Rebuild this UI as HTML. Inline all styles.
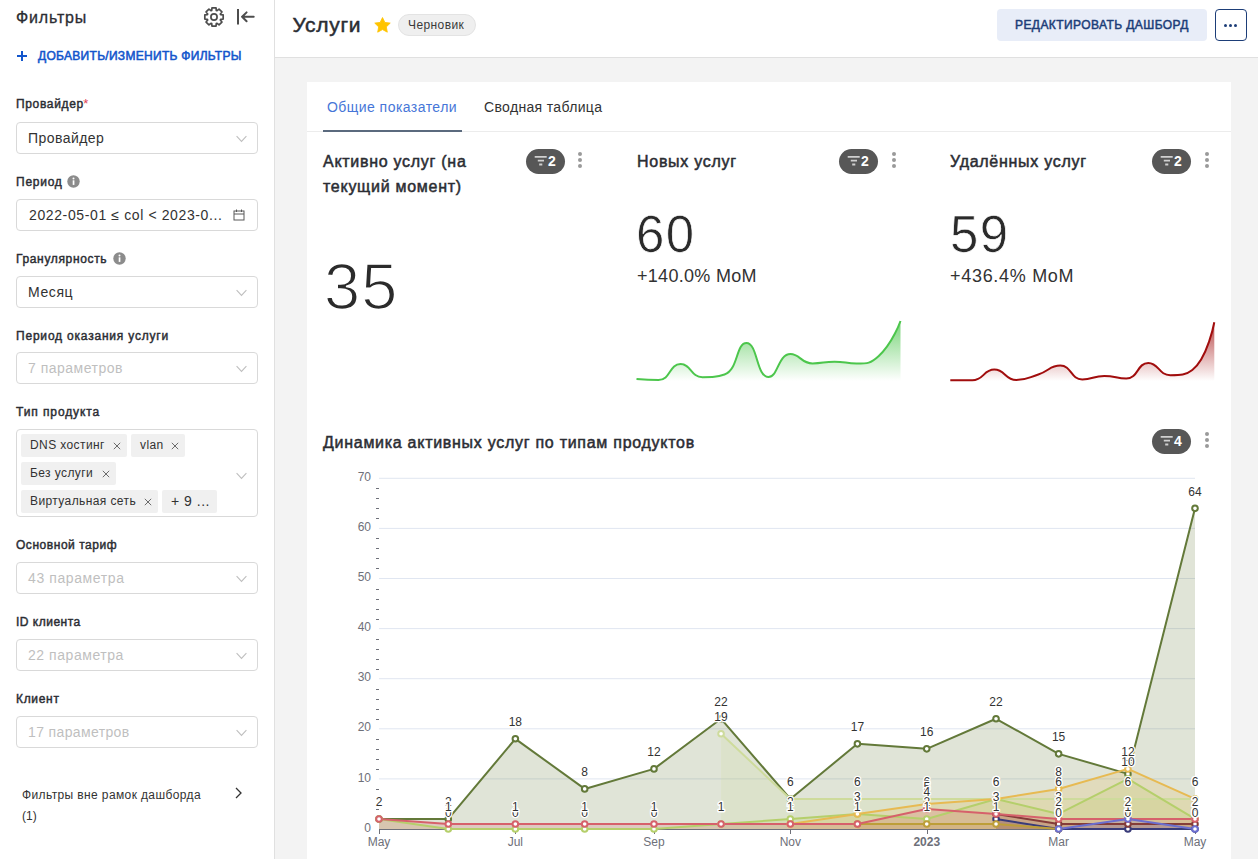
<!DOCTYPE html>
<html><head><meta charset="utf-8">
<style>
*{box-sizing:border-box;margin:0;padding:0}
html,body{width:1258px;height:859px;overflow:hidden;background:#f3f3f3;font-family:"Liberation Sans",sans-serif;color:#323232}
.abs{position:absolute}
#side{position:absolute;left:0;top:0;width:275px;height:859px;background:#fff;border-right:1px solid #e0e0e0}
#hdr{position:absolute;left:275px;top:0;width:983px;height:58px;background:#fff;border-bottom:1px solid #e0e0e0}
.t{position:absolute;white-space:nowrap;line-height:1}
.lbl{font-size:12px;font-weight:normal;-webkit-text-stroke:0.45px #2b2d33;color:#2b2d33;letter-spacing:0.65px}
.sel{position:absolute;left:16px;width:242px;height:32px;border:1px solid #d9d9d9;border-radius:4px;background:#fff}
.sel .v{position:absolute;left:11px;top:8px;font-size:14px;line-height:1;white-space:nowrap;color:#323232;letter-spacing:0.45px}
.sel .ph{color:#bfbfbf}
.chev{position:absolute;left:219px;top:12px;width:11px;height:8px}
.tag{position:absolute;height:23px;background:#f0f0f0;border-radius:2px;font-size:12px;line-height:23px;padding-left:9px;color:#323232;white-space:nowrap;letter-spacing:0.4px}
.tag svg{position:absolute;top:8px}
#card{position:absolute;left:307px;top:82px;width:924px;height:800px;background:#fff}
.ct{font-size:16px;font-weight:normal;-webkit-text-stroke:0.5px #2b2d33;color:#2b2d33;line-height:25px;letter-spacing:0.72px !important}
.badge{position:absolute;width:39px;height:25px;border-radius:12.5px;background:#575757;color:#fff;font-size:14px;font-weight:bold}
.badge svg{position:absolute;left:8px;top:6px}
.badge b{position:absolute;left:22px;top:5px;line-height:1;font-size:14px}
.sb{font-weight:normal;-webkit-text-stroke:0.5px #2b2d33;color:#2b2d33}
.kebab{position:absolute;width:4px}
.kebab i{display:block;width:4px;height:4px;border-radius:2px;background:#9a9a9a;margin-bottom:2.1px}
svg text.ax{font-family:"Liberation Sans",sans-serif;font-size:12px;fill:#6E7079}
svg text.axb{font-weight:bold}
svg text.lb{font-family:"Liberation Sans",sans-serif;font-size:12px;fill:#333;text-anchor:middle;stroke:#fff;stroke-width:2.5px;paint-order:stroke;stroke-linejoin:round}
</style></head><body>
<div id="side">
  <div class="t sb" style="left:16px;top:10px;font-size:16px;letter-spacing:0.84px;-webkit-text-stroke-width:0.3px">Фильтры</div>
  <svg class="abs" style="left:202px;top:5px" width="24" height="24" viewBox="0 0 24 24"><path fill="none" stroke="#4d4d4d" stroke-width="1.7" stroke-linejoin="round" d="M18.62,9.72 L21.18,9.97 L21.18,14.03 L18.62,14.28 L18.29,15.07 L19.93,17.05 L17.05,19.93 L15.07,18.29 L14.28,18.62 L14.03,21.18 L9.97,21.18 L9.72,18.62 L8.93,18.29 L6.95,19.93 L4.07,17.05 L5.71,15.07 L5.38,14.28 L2.82,14.03 L2.82,9.97 L5.38,9.72 L5.71,8.93 L4.07,6.95 L6.95,4.07 L8.93,5.71 L9.72,5.38 L9.97,2.82 L14.03,2.82 L14.28,5.38 L15.07,5.71 L17.05,4.07 L19.93,6.95 L18.29,8.93Z"/><circle cx="12" cy="12" r="3.1" fill="none" stroke="#4d4d4d" stroke-width="1.7"/></svg>
  <svg class="abs" style="left:236px;top:8px" width="20" height="18" viewBox="0 0 20 18"><path d="M2 1v15.6" stroke="#4d4d4d" stroke-width="2" fill="none"/><path d="M17.7 8.75H6M10.6 4.4L6.1 8.75l4.5 4.5" stroke="#4d4d4d" stroke-width="2" fill="none" stroke-linecap="round" stroke-linejoin="round"/></svg>
  <svg class="abs" style="left:16px;top:50px" width="12" height="12" viewBox="0 0 12 12"><path d="M6 1v10M1 6h10" stroke="#1356cc" stroke-width="2"/></svg>
  <div class="t sb" style="left:38px;top:50px;font-size:12px;color:#1356cc;-webkit-text-stroke:0.55px #1356cc;letter-spacing:0.3px">ДОБАВИТЬ/ИЗМЕНИТЬ ФИЛЬТРЫ</div>

  <div class="t lbl" style="left:16px;top:97.2px;letter-spacing:0.65px">Провайдер<span style="color:#e04355;-webkit-text-stroke:0;font-size:13px;position:relative;top:0px;margin-left:-0.5px">*</span></div>
  <div class="sel" style="top:122px"><div class="v" style="left:11px">Провайдер</div><svg class="chev" viewBox="0 0 11 8"><path d="M0.6 1.2l4.9 5.2 4.9-5.2" fill="none" stroke="#bfbfbf" stroke-width="1.1"/></svg></div>

  <div class="t lbl" style="left:16px;top:175.7px;letter-spacing:0.75px">Период</div>
  <svg class="abs" style="left:66.5px;top:175.4px" width="13" height="13" viewBox="0 0 13 13"><circle cx="6.5" cy="6.5" r="6.2" fill="#8c8c8c"/><rect x="5.7" y="5.3" width="1.7" height="4.6" fill="#fff"/><circle cx="6.5" cy="3.6" r="1" fill="#fff"/></svg>
  <div class="sel" style="top:199px"><div class="v" style="left:12px;top:8px;letter-spacing:0.62px">2022-05-01 ≤ col &lt; 2023-0...</div><svg class="abs" style="left:216px;top:9px" width="12" height="12" viewBox="0 0 12 12"><rect x="1" y="2" width="10" height="9" fill="none" stroke="#595959" stroke-width="1"/><path d="M1 5h10M3.5 0.5v2.5M8.5 0.5v2.5" stroke="#595959" stroke-width="1"/></svg></div>

  <div class="t lbl" style="left:16px;top:252.7px;letter-spacing:0.65px">Гранулярность</div>
  <svg class="abs" style="left:112.5px;top:252.4px" width="13" height="13" viewBox="0 0 13 13"><circle cx="6.5" cy="6.5" r="6.2" fill="#8c8c8c"/><rect x="5.7" y="5.3" width="1.7" height="4.6" fill="#fff"/><circle cx="6.5" cy="3.6" r="1" fill="#fff"/></svg>
  <div class="sel" style="top:276px"><div class="v" style="letter-spacing:0.6px">Месяц</div><svg class="chev" viewBox="0 0 11 8"><path d="M0.6 1.2l4.9 5.2 4.9-5.2" fill="none" stroke="#bfbfbf" stroke-width="1.1"/></svg></div>

  <div class="t lbl" style="left:16px;top:330px;letter-spacing:0.8px">Период оказания услуги</div>
  <div class="sel" style="top:352px"><div class="v ph" style="letter-spacing:0.5px">7 параметров</div><svg class="chev" viewBox="0 0 11 8"><path d="M0.6 1.2l4.9 5.2 4.9-5.2" fill="none" stroke="#bfbfbf" stroke-width="1.1"/></svg></div>

  <div class="t lbl" style="left:16px;top:406px;letter-spacing:0.9px">Тип продукта</div>
  <div class="sel" style="top:429px;height:88px">
    <div class="tag" style="left:4px;top:3.5px;width:106px">DNS хостинг<svg style="left:92px" width="8" height="8" viewBox="0 0 8 8"><path d="M0.8 0.8l6.4 6.4M7.2 0.8L0.8 7.2" stroke="#6b6b6b" stroke-width="1"/></svg></div>
    <div class="tag" style="left:114px;top:3.5px;width:54px">vlan<svg style="left:40px" width="8" height="8" viewBox="0 0 8 8"><path d="M0.8 0.8l6.4 6.4M7.2 0.8L0.8 7.2" stroke="#6b6b6b" stroke-width="1"/></svg></div>
    <div class="tag" style="left:4px;top:31.5px;width:95px">Без услуги<svg style="left:81px" width="8" height="8" viewBox="0 0 8 8"><path d="M0.8 0.8l6.4 6.4M7.2 0.8L0.8 7.2" stroke="#6b6b6b" stroke-width="1"/></svg></div>
    <div class="tag" style="left:4px;top:59.5px;width:137px">Виртуальная сеть<svg style="left:123px" width="8" height="8" viewBox="0 0 8 8"><path d="M0.8 0.8l6.4 6.4M7.2 0.8L0.8 7.2" stroke="#6b6b6b" stroke-width="1"/></svg></div>
    <div class="tag" style="left:145px;top:59.5px;width:55px;font-size:14px;letter-spacing:0.5px">+ 9 ...</div>
    <svg class="chev" style="top:42px" viewBox="0 0 11 8"><path d="M0.6 1.2l4.9 5.2 4.9-5.2" fill="none" stroke="#bfbfbf" stroke-width="1.1"/></svg>
  </div>

  <div class="t lbl" style="left:16px;top:539px;letter-spacing:0.54px">Основной тариф</div>
  <div class="sel" style="top:562px"><div class="v ph" style="top:8px;letter-spacing:0.6px">43 параметра</div><svg class="chev" viewBox="0 0 11 8"><path d="M0.6 1.2l4.9 5.2 4.9-5.2" fill="none" stroke="#bfbfbf" stroke-width="1.1"/></svg></div>

  <div class="t lbl" style="left:16px;top:615.5px;letter-spacing:0.5px">ID клиента</div>
  <div class="sel" style="top:639px"><div class="v ph" style="letter-spacing:0.55px">22 параметра</div><svg class="chev" viewBox="0 0 11 8"><path d="M0.6 1.2l4.9 5.2 4.9-5.2" fill="none" stroke="#bfbfbf" stroke-width="1.1"/></svg></div>

  <div class="t lbl" style="left:16px;top:693px;letter-spacing:0.68px">Клиент</div>
  <div class="sel" style="top:716px"><div class="v ph" style="letter-spacing:0.37px">17 параметров</div><svg class="chev" viewBox="0 0 11 8"><path d="M0.6 1.2l4.9 5.2 4.9-5.2" fill="none" stroke="#bfbfbf" stroke-width="1.1"/></svg></div>

  <div class="t" style="left:22px;top:789px;font-size:12px;color:#323232;letter-spacing:0.38px">Фильтры вне рамок дашборда</div>
  <div class="t" style="left:22px;top:810px;font-size:12px;color:#323232">(1)</div>
  <svg class="abs" style="left:234px;top:787px" width="10" height="12" viewBox="0 0 10 12"><path d="M2 1l5 5-5 5" fill="none" stroke="#323232" stroke-width="1.3"/></svg>
</div>

<div id="hdr">
  <div class="t sb" style="left:17.5px;top:14px;font-size:21px;letter-spacing:0.68px">Услуги</div>
  <svg class="abs" style="left:99px;top:16.5px" width="17" height="16" viewBox="0 0 24 23"><path d="M12 0.8l3.4 7 7.7 1-5.6 5.4 1.4 7.6L12 18.1l-6.9 3.7 1.4-7.6L0.9 8.8l7.7-1z" fill="#ffc400" stroke="#ffc400" stroke-width="1.2" stroke-linejoin="round"/></svg>
  <div class="abs" style="left:123px;top:14px;width:78px;height:22px;border-radius:11px;background:#efefef;border:1px solid #e3e3e3"></div>
  <div class="t" style="left:133px;top:19px;font-size:12px;color:#3a3a3a;letter-spacing:0.4px">Черновик</div>
  <div class="abs" style="left:722px;top:9px;width:210px;height:32px;border-radius:4px;background:#e8edf8"></div>
  <div class="t sb" style="left:740px;top:19px;font-size:12px;color:#1d3e78;-webkit-text-stroke-color:#1d3e78;letter-spacing:0.42px">РЕДАКТИРОВАТЬ ДАШБОРД</div>
  <div class="abs" style="left:940px;top:9px;width:32px;height:32px;border-radius:4px;border:1px solid #1d3e78;background:#fff"></div>
  <div class="abs" style="left:949px;top:23.5px;width:14px;height:3px"><i style="position:absolute;left:0;width:3px;height:3px;border-radius:1.5px;background:#1d3e78"></i><i style="position:absolute;left:5px;width:3px;height:3px;border-radius:1.5px;background:#1d3e78"></i><i style="position:absolute;left:10px;width:3px;height:3px;border-radius:1.5px;background:#1d3e78"></i></div>
</div>

<div id="card">
  <div class="t" style="left:20px;top:18px;font-size:14px;color:#4676d8;letter-spacing:0.45px">Общие показатели</div>
  <div class="t" style="left:177px;top:18px;font-size:14px;color:#323232;letter-spacing:0.34px">Сводная таблица</div>
  <div class="abs" style="left:0;top:49px;width:924px;height:1px;background:#ececec"></div>
  <div class="abs" style="left:16px;top:48px;width:139px;height:2px;background:#5b6a7e"></div>

  <div class="t ct" style="left:16px;top:67px;letter-spacing:0.1px">Активно услуг (на<br>текущий момент)</div>
  <div class="badge" style="left:219px;top:67px"><svg width="14" height="12" viewBox="0 0 14 12"><path d="M0.7 1.9h12M3.8 5.7h6.2M5.2 9.5h3.1" stroke="#d0d0d0" stroke-width="1.8"/></svg><b>2</b></div>
  <div class="kebab" style="left:271px;top:70px"><i></i><i></i><i></i></div>
  <div class="t" style="left:17px;top:171.5px;font-size:65px;color:#2b2b2b;letter-spacing:1.2px;-webkit-text-stroke:1.6px #fff">35</div>

  <div class="t ct" style="left:330px;top:67px;letter-spacing:0px">Новых услуг</div>
  <div class="badge" style="left:532px;top:67px"><svg width="14" height="12" viewBox="0 0 14 12"><path d="M0.7 1.9h12M3.8 5.7h6.2M5.2 9.5h3.1" stroke="#d0d0d0" stroke-width="1.8"/></svg><b>2</b></div>
  <div class="kebab" style="left:585px;top:70px"><i></i><i></i><i></i></div>
  <div class="t" style="left:329px;top:127px;font-size:51px;color:#2b2b2b;letter-spacing:1.5px;-webkit-text-stroke:0.7px #fff">60</div>
  <div class="t" style="left:330px;top:185.3px;font-size:18px;color:#323232;letter-spacing:0.3px">+140.0% MoM</div>

  <div class="t ct" style="left:643px;top:67px;letter-spacing:0px">Удалённых услуг</div>
  <div class="badge" style="left:845px;top:67px"><svg width="14" height="12" viewBox="0 0 14 12"><path d="M0.7 1.9h12M3.8 5.7h6.2M5.2 9.5h3.1" stroke="#d0d0d0" stroke-width="1.8"/></svg><b>2</b></div>
  <div class="kebab" style="left:898px;top:70px"><i></i><i></i><i></i></div>
  <div class="t" style="left:643px;top:127px;font-size:51px;color:#2b2b2b;letter-spacing:1.4px;-webkit-text-stroke:0.7px #fff">59</div>
  <div class="t" style="left:643px;top:185.3px;font-size:18px;color:#323232;letter-spacing:0.7px">+436.4% MoM</div>

  <div class="t ct" style="left:16px;top:347.5px;letter-spacing:0.07px">Динамика активных услуг по типам продуктов</div>
  <div class="badge" style="left:845px;top:347px"><svg width="14" height="12" viewBox="0 0 14 12"><path d="M0.7 1.9h12M3.8 5.7h6.2M5.2 9.5h3.1" stroke="#d0d0d0" stroke-width="1.8"/></svg><b>4</b></div>
  <div class="kebab" style="left:898px;top:350px"><i></i><i></i><i></i></div>
</div>
<svg class="abs" style="left:0;top:0" width="1258" height="859">
<defs><linearGradient id="gg" x1="0" y1="0" x2="0" y2="1"><stop offset="0" stop-color="#4cc64c" stop-opacity="0.75"/><stop offset="1" stop-color="#4cc64c" stop-opacity="0"/></linearGradient></defs><path d="M636.5,379 C636.5,379 648.66,380 658.5,380 C670.66,380 669.18,364 680.5,364 C691.18,364 690.7,377.2 702.5,377.2 C712.7,377.2 716.45,377.2 724.5,374.5 C738.45,369.82 735.79,343 746.5,343 C757.79,343 756.18,377 768.5,377 C778.18,377 777.94,354 790.5,354 C799.94,354 801.06,363.4 812.5,363.4 C823.06,363.4 823.5,361.7 834.5,361.7 C845.5,361.7 845.76,363.5 856.5,363.5 C867.76,363.5 870.63,363.5 878.5,356.3 C892.63,343.36 900.5,321 900.5,321 L900.5,381 L636.5,381 Z" fill="url(#gg)" stroke="none"/><path d="M636.5,379 C636.5,379 648.66,380 658.5,380 C670.66,380 669.18,364 680.5,364 C691.18,364 690.7,377.2 702.5,377.2 C712.7,377.2 716.45,377.2 724.5,374.5 C738.45,369.82 735.79,343 746.5,343 C757.79,343 756.18,377 768.5,377 C778.18,377 777.94,354 790.5,354 C799.94,354 801.06,363.4 812.5,363.4 C823.06,363.4 823.5,361.7 834.5,361.7 C845.5,361.7 845.76,363.5 856.5,363.5 C867.76,363.5 870.63,363.5 878.5,356.3 C892.63,343.36 900.5,321 900.5,321" fill="none" stroke="#4cc64c" stroke-width="2"/>
<defs><linearGradient id="rg" x1="0" y1="0" x2="0" y2="1"><stop offset="0" stop-color="#a10d0d" stop-opacity="0.75"/><stop offset="1" stop-color="#a10d0d" stop-opacity="0"/></linearGradient></defs><path d="M950.3,380.3 C950.3,380.3 961.88,380.3 972.3,380.3 C983.88,380.3 983.27,369.6 994.3,369.6 C1005.27,369.6 1004.91,380 1016.3,380 C1026.91,380 1027.55,378.02 1038.3,374.5 C1049.55,370.82 1049.8,365.6 1060.3,365.6 C1071.8,365.6 1070.46,379.4 1082.3,379.4 C1092.46,379.4 1093.27,375.9 1104.3,375.9 C1115.27,375.9 1116.38,378.6 1126.3,378.6 C1138.38,378.6 1136.92,363 1148.3,363 C1158.92,363 1158.71,375.2 1170.3,375.2 C1180.71,375.2 1185.69,375.2 1192.3,370 C1207.69,357.9 1214.3,322.2 1214.3,322.2 L1214.3,381 L950.3,381 Z" fill="url(#rg)" stroke="none"/><path d="M950.3,380.3 C950.3,380.3 961.88,380.3 972.3,380.3 C983.88,380.3 983.27,369.6 994.3,369.6 C1005.27,369.6 1004.91,380 1016.3,380 C1026.91,380 1027.55,378.02 1038.3,374.5 C1049.55,370.82 1049.8,365.6 1060.3,365.6 C1071.8,365.6 1070.46,379.4 1082.3,379.4 C1092.46,379.4 1093.27,375.9 1104.3,375.9 C1115.27,375.9 1116.38,378.6 1126.3,378.6 C1138.38,378.6 1136.92,363 1148.3,363 C1158.92,363 1158.71,375.2 1170.3,375.2 C1180.71,375.2 1185.69,375.2 1192.3,370 C1207.69,357.9 1214.3,322.2 1214.3,322.2" fill="none" stroke="#a10d0d" stroke-width="2"/>
<line x1="379" y1="778.9" x2="1195" y2="778.9" stroke="#E0E6F1" stroke-width="1"/>
<text x="371" y="781.5" text-anchor="end" class="ax">10</text>
<line x1="379" y1="728.8" x2="1195" y2="728.8" stroke="#E0E6F1" stroke-width="1"/>
<text x="371" y="731.4" text-anchor="end" class="ax">20</text>
<line x1="379" y1="678.7" x2="1195" y2="678.7" stroke="#E0E6F1" stroke-width="1"/>
<text x="371" y="681.3" text-anchor="end" class="ax">30</text>
<line x1="379" y1="628.6" x2="1195" y2="628.6" stroke="#E0E6F1" stroke-width="1"/>
<text x="371" y="631.2" text-anchor="end" class="ax">40</text>
<line x1="379" y1="578.5" x2="1195" y2="578.5" stroke="#E0E6F1" stroke-width="1"/>
<text x="371" y="581.1" text-anchor="end" class="ax">50</text>
<line x1="379" y1="528.4" x2="1195" y2="528.4" stroke="#E0E6F1" stroke-width="1"/>
<text x="371" y="531" text-anchor="end" class="ax">60</text>
<line x1="379" y1="478.3" x2="1195" y2="478.3" stroke="#E0E6F1" stroke-width="1"/>
<text x="371" y="480.9" text-anchor="end" class="ax">70</text>
<text x="371" y="831.6" text-anchor="end" class="ax">0</text>
<line x1="376" y1="819.5" x2="379" y2="819.5" stroke="#6E7079" stroke-width="1"/>
<line x1="376" y1="809.5" x2="379" y2="809.5" stroke="#6E7079" stroke-width="1"/>
<line x1="376" y1="799.5" x2="379" y2="799.5" stroke="#6E7079" stroke-width="1"/>
<line x1="376" y1="789.5" x2="379" y2="789.5" stroke="#6E7079" stroke-width="1"/>
<line x1="376" y1="769.5" x2="379" y2="769.5" stroke="#6E7079" stroke-width="1"/>
<line x1="376" y1="759.5" x2="379" y2="759.5" stroke="#6E7079" stroke-width="1"/>
<line x1="376" y1="749.5" x2="379" y2="749.5" stroke="#6E7079" stroke-width="1"/>
<line x1="376" y1="739.5" x2="379" y2="739.5" stroke="#6E7079" stroke-width="1"/>
<line x1="376" y1="719.5" x2="379" y2="719.5" stroke="#6E7079" stroke-width="1"/>
<line x1="376" y1="709.5" x2="379" y2="709.5" stroke="#6E7079" stroke-width="1"/>
<line x1="376" y1="699.5" x2="379" y2="699.5" stroke="#6E7079" stroke-width="1"/>
<line x1="376" y1="689.5" x2="379" y2="689.5" stroke="#6E7079" stroke-width="1"/>
<line x1="376" y1="669.5" x2="379" y2="669.5" stroke="#6E7079" stroke-width="1"/>
<line x1="376" y1="659.5" x2="379" y2="659.5" stroke="#6E7079" stroke-width="1"/>
<line x1="376" y1="649.5" x2="379" y2="649.5" stroke="#6E7079" stroke-width="1"/>
<line x1="376" y1="639.5" x2="379" y2="639.5" stroke="#6E7079" stroke-width="1"/>
<line x1="376" y1="619.5" x2="379" y2="619.5" stroke="#6E7079" stroke-width="1"/>
<line x1="376" y1="609.5" x2="379" y2="609.5" stroke="#6E7079" stroke-width="1"/>
<line x1="376" y1="599.5" x2="379" y2="599.5" stroke="#6E7079" stroke-width="1"/>
<line x1="376" y1="589.5" x2="379" y2="589.5" stroke="#6E7079" stroke-width="1"/>
<line x1="376" y1="568.5" x2="379" y2="568.5" stroke="#6E7079" stroke-width="1"/>
<line x1="376" y1="558.5" x2="379" y2="558.5" stroke="#6E7079" stroke-width="1"/>
<line x1="376" y1="548.5" x2="379" y2="548.5" stroke="#6E7079" stroke-width="1"/>
<line x1="376" y1="538.5" x2="379" y2="538.5" stroke="#6E7079" stroke-width="1"/>
<line x1="376" y1="518.5" x2="379" y2="518.5" stroke="#6E7079" stroke-width="1"/>
<line x1="376" y1="508.5" x2="379" y2="508.5" stroke="#6E7079" stroke-width="1"/>
<line x1="376" y1="498.5" x2="379" y2="498.5" stroke="#6E7079" stroke-width="1"/>
<line x1="376" y1="488.5" x2="379" y2="488.5" stroke="#6E7079" stroke-width="1"/>
<line x1="379" y1="829.5" x2="1195" y2="829.5" stroke="#6E7079" stroke-width="1"/>
<line x1="379.5" y1="829.0" x2="379.5" y2="834.0" stroke="#6E7079" stroke-width="1"/>
<line x1="515.5" y1="829.0" x2="515.5" y2="834.0" stroke="#6E7079" stroke-width="1"/>
<line x1="654.5" y1="829.0" x2="654.5" y2="834.0" stroke="#6E7079" stroke-width="1"/>
<line x1="790.5" y1="829.0" x2="790.5" y2="834.0" stroke="#6E7079" stroke-width="1"/>
<line x1="927.5" y1="829.0" x2="927.5" y2="834.0" stroke="#6E7079" stroke-width="1"/>
<line x1="1059.5" y1="829.0" x2="1059.5" y2="834.0" stroke="#6E7079" stroke-width="1"/>
<line x1="1195.5" y1="829.0" x2="1195.5" y2="834.0" stroke="#6E7079" stroke-width="1"/>
<polygon points="379,829.0 379,818.98 448.3,818.98 515.37,738.82 584.68,788.92 653.98,768.88 721.05,718.78 790.35,798.94 857.42,743.83 926.73,748.84 996.03,718.78 1058.63,753.85 1127.93,773.89 1195,508.36 1195,829.0" fill="#637939" fill-opacity="0.2"/>
<polygon points="721.05,829.0 721.05,733.81 790.35,798.94 857.42,798.94 926.73,798.94 996.03,798.94 1058.63,798.94 1127.93,798.94 1195,798.94 1195,829.0" fill="#cedb9c" fill-opacity="0.2"/>
<polygon points="379,829.0 379,818.98 448.3,829 515.37,829 584.68,829 653.98,829 721.05,823.99 790.35,818.98 857.42,813.97 926.73,818.98 996.03,798.94 1058.63,813.97 1127.93,778.9 1195,818.98 1195,829.0" fill="#b5cf6b" fill-opacity="0.2"/>
<polygon points="790.35,829.0 790.35,823.99 857.42,813.97 926.73,803.95 996.03,798.94 1058.63,788.92 1127.93,768.88 1195,798.94 1195,829.0" fill="#e7ba52" fill-opacity="0.2"/>
<polygon points="996.03,829.0 996.03,818.98 1058.63,829 1127.93,829 1195,829 1195,829.0" fill="#393b79" fill-opacity="0.2"/>
<polygon points="996.03,829.0 996.03,813.97 1058.63,823.99 1127.93,823.99 1195,823.99 1195,829.0" fill="#843c39" fill-opacity="0.2"/>
<polygon points="857.42,829.0 857.42,823.99 926.73,823.99 996.03,823.99 1058.63,829 1058.63,829.0" fill="#bd9e39" fill-opacity="0.2"/>
<polygon points="379,829.0 379,818.98 448.3,823.99 515.37,823.99 584.68,823.99 653.98,823.99 721.05,823.99 790.35,823.99 857.42,823.99 926.73,808.96 996.03,813.97 1058.63,818.98 1127.93,818.98 1195,818.98 1195,829.0" fill="#d6616b" fill-opacity="0.2"/>
<polygon points="1058.63,829.0 1058.63,829 1127.93,818.98 1195,829 1195,829.0" fill="#6b6ecf" fill-opacity="0.2"/>
<polyline points="379,818.98 448.3,818.98 515.37,738.82 584.68,788.92 653.98,768.88 721.05,718.78 790.35,798.94 857.42,743.83 926.73,748.84 996.03,718.78 1058.63,753.85 1127.93,773.89 1195,508.36" fill="none" stroke="#637939" stroke-width="2" stroke-linejoin="round"/>
<polyline points="721.05,733.81 790.35,798.94 857.42,798.94 926.73,798.94 996.03,798.94 1058.63,798.94 1127.93,798.94 1195,798.94" fill="none" stroke="#cedb9c" stroke-width="2" stroke-linejoin="round"/>
<polyline points="379,818.98 448.3,829 515.37,829 584.68,829 653.98,829 721.05,823.99 790.35,818.98 857.42,813.97 926.73,818.98 996.03,798.94 1058.63,813.97 1127.93,778.9 1195,818.98" fill="none" stroke="#b5cf6b" stroke-width="2" stroke-linejoin="round"/>
<polyline points="790.35,823.99 857.42,813.97 926.73,803.95 996.03,798.94 1058.63,788.92 1127.93,768.88 1195,798.94" fill="none" stroke="#e7ba52" stroke-width="2" stroke-linejoin="round"/>
<polyline points="996.03,818.98 1058.63,829 1127.93,829 1195,829" fill="none" stroke="#393b79" stroke-width="2" stroke-linejoin="round"/>
<polyline points="996.03,813.97 1058.63,823.99 1127.93,823.99 1195,823.99" fill="none" stroke="#843c39" stroke-width="2" stroke-linejoin="round"/>
<polyline points="857.42,823.99 926.73,823.99 996.03,823.99 1058.63,829" fill="none" stroke="#bd9e39" stroke-width="2" stroke-linejoin="round"/>
<polyline points="379,818.98 448.3,823.99 515.37,823.99 584.68,823.99 653.98,823.99 721.05,823.99 790.35,823.99 857.42,823.99 926.73,808.96 996.03,813.97 1058.63,818.98 1127.93,818.98 1195,818.98" fill="none" stroke="#d6616b" stroke-width="2" stroke-linejoin="round"/>
<polyline points="1058.63,829 1127.93,818.98 1195,829" fill="none" stroke="#6b6ecf" stroke-width="2" stroke-linejoin="round"/>
<circle cx="379" cy="818.98" r="2.8" fill="#fff" stroke="#637939" stroke-width="2"/>
<circle cx="448.3" cy="818.98" r="2.8" fill="#fff" stroke="#637939" stroke-width="2"/>
<circle cx="515.37" cy="738.82" r="2.8" fill="#fff" stroke="#637939" stroke-width="2"/>
<circle cx="584.68" cy="788.92" r="2.8" fill="#fff" stroke="#637939" stroke-width="2"/>
<circle cx="653.98" cy="768.88" r="2.8" fill="#fff" stroke="#637939" stroke-width="2"/>
<circle cx="721.05" cy="718.78" r="2.8" fill="#fff" stroke="#637939" stroke-width="2"/>
<circle cx="790.35" cy="798.94" r="2.8" fill="#fff" stroke="#637939" stroke-width="2"/>
<circle cx="857.42" cy="743.83" r="2.8" fill="#fff" stroke="#637939" stroke-width="2"/>
<circle cx="926.73" cy="748.84" r="2.8" fill="#fff" stroke="#637939" stroke-width="2"/>
<circle cx="996.03" cy="718.78" r="2.8" fill="#fff" stroke="#637939" stroke-width="2"/>
<circle cx="1058.63" cy="753.85" r="2.8" fill="#fff" stroke="#637939" stroke-width="2"/>
<circle cx="1127.93" cy="773.89" r="2.8" fill="#fff" stroke="#637939" stroke-width="2"/>
<circle cx="1195" cy="508.36" r="2.8" fill="#fff" stroke="#637939" stroke-width="2"/>
<circle cx="721.05" cy="733.81" r="2.8" fill="#fff" stroke="#cedb9c" stroke-width="2"/>
<circle cx="790.35" cy="798.94" r="2.8" fill="#fff" stroke="#cedb9c" stroke-width="2"/>
<circle cx="857.42" cy="798.94" r="2.8" fill="#fff" stroke="#cedb9c" stroke-width="2"/>
<circle cx="926.73" cy="798.94" r="2.8" fill="#fff" stroke="#cedb9c" stroke-width="2"/>
<circle cx="996.03" cy="798.94" r="2.8" fill="#fff" stroke="#cedb9c" stroke-width="2"/>
<circle cx="1058.63" cy="798.94" r="2.8" fill="#fff" stroke="#cedb9c" stroke-width="2"/>
<circle cx="1127.93" cy="798.94" r="2.8" fill="#fff" stroke="#cedb9c" stroke-width="2"/>
<circle cx="1195" cy="798.94" r="2.8" fill="#fff" stroke="#cedb9c" stroke-width="2"/>
<circle cx="379" cy="818.98" r="2.8" fill="#fff" stroke="#b5cf6b" stroke-width="2"/>
<circle cx="448.3" cy="829" r="2.8" fill="#fff" stroke="#b5cf6b" stroke-width="2"/>
<circle cx="515.37" cy="829" r="2.8" fill="#fff" stroke="#b5cf6b" stroke-width="2"/>
<circle cx="584.68" cy="829" r="2.8" fill="#fff" stroke="#b5cf6b" stroke-width="2"/>
<circle cx="653.98" cy="829" r="2.8" fill="#fff" stroke="#b5cf6b" stroke-width="2"/>
<circle cx="721.05" cy="823.99" r="2.8" fill="#fff" stroke="#b5cf6b" stroke-width="2"/>
<circle cx="790.35" cy="818.98" r="2.8" fill="#fff" stroke="#b5cf6b" stroke-width="2"/>
<circle cx="857.42" cy="813.97" r="2.8" fill="#fff" stroke="#b5cf6b" stroke-width="2"/>
<circle cx="926.73" cy="818.98" r="2.8" fill="#fff" stroke="#b5cf6b" stroke-width="2"/>
<circle cx="996.03" cy="798.94" r="2.8" fill="#fff" stroke="#b5cf6b" stroke-width="2"/>
<circle cx="1058.63" cy="813.97" r="2.8" fill="#fff" stroke="#b5cf6b" stroke-width="2"/>
<circle cx="1127.93" cy="778.9" r="2.8" fill="#fff" stroke="#b5cf6b" stroke-width="2"/>
<circle cx="1195" cy="818.98" r="2.8" fill="#fff" stroke="#b5cf6b" stroke-width="2"/>
<circle cx="790.35" cy="823.99" r="2.8" fill="#fff" stroke="#e7ba52" stroke-width="2"/>
<circle cx="857.42" cy="813.97" r="2.8" fill="#fff" stroke="#e7ba52" stroke-width="2"/>
<circle cx="926.73" cy="803.95" r="2.8" fill="#fff" stroke="#e7ba52" stroke-width="2"/>
<circle cx="996.03" cy="798.94" r="2.8" fill="#fff" stroke="#e7ba52" stroke-width="2"/>
<circle cx="1058.63" cy="788.92" r="2.8" fill="#fff" stroke="#e7ba52" stroke-width="2"/>
<circle cx="1127.93" cy="768.88" r="2.8" fill="#fff" stroke="#e7ba52" stroke-width="2"/>
<circle cx="1195" cy="798.94" r="2.8" fill="#fff" stroke="#e7ba52" stroke-width="2"/>
<circle cx="996.03" cy="818.98" r="2.8" fill="#fff" stroke="#393b79" stroke-width="2"/>
<circle cx="1058.63" cy="829" r="2.8" fill="#fff" stroke="#393b79" stroke-width="2"/>
<circle cx="1127.93" cy="829" r="2.8" fill="#fff" stroke="#393b79" stroke-width="2"/>
<circle cx="1195" cy="829" r="2.8" fill="#fff" stroke="#393b79" stroke-width="2"/>
<circle cx="996.03" cy="813.97" r="2.8" fill="#fff" stroke="#843c39" stroke-width="2"/>
<circle cx="1058.63" cy="823.99" r="2.8" fill="#fff" stroke="#843c39" stroke-width="2"/>
<circle cx="1127.93" cy="823.99" r="2.8" fill="#fff" stroke="#843c39" stroke-width="2"/>
<circle cx="1195" cy="823.99" r="2.8" fill="#fff" stroke="#843c39" stroke-width="2"/>
<circle cx="857.42" cy="823.99" r="2.8" fill="#fff" stroke="#bd9e39" stroke-width="2"/>
<circle cx="926.73" cy="823.99" r="2.8" fill="#fff" stroke="#bd9e39" stroke-width="2"/>
<circle cx="996.03" cy="823.99" r="2.8" fill="#fff" stroke="#bd9e39" stroke-width="2"/>
<circle cx="1058.63" cy="829" r="2.8" fill="#fff" stroke="#bd9e39" stroke-width="2"/>
<circle cx="379" cy="818.98" r="2.8" fill="#fff" stroke="#d6616b" stroke-width="2"/>
<circle cx="448.3" cy="823.99" r="2.8" fill="#fff" stroke="#d6616b" stroke-width="2"/>
<circle cx="515.37" cy="823.99" r="2.8" fill="#fff" stroke="#d6616b" stroke-width="2"/>
<circle cx="584.68" cy="823.99" r="2.8" fill="#fff" stroke="#d6616b" stroke-width="2"/>
<circle cx="653.98" cy="823.99" r="2.8" fill="#fff" stroke="#d6616b" stroke-width="2"/>
<circle cx="721.05" cy="823.99" r="2.8" fill="#fff" stroke="#d6616b" stroke-width="2"/>
<circle cx="790.35" cy="823.99" r="2.8" fill="#fff" stroke="#d6616b" stroke-width="2"/>
<circle cx="857.42" cy="823.99" r="2.8" fill="#fff" stroke="#d6616b" stroke-width="2"/>
<circle cx="926.73" cy="808.96" r="2.8" fill="#fff" stroke="#d6616b" stroke-width="2"/>
<circle cx="996.03" cy="813.97" r="2.8" fill="#fff" stroke="#d6616b" stroke-width="2"/>
<circle cx="1058.63" cy="818.98" r="2.8" fill="#fff" stroke="#d6616b" stroke-width="2"/>
<circle cx="1127.93" cy="818.98" r="2.8" fill="#fff" stroke="#d6616b" stroke-width="2"/>
<circle cx="1195" cy="818.98" r="2.8" fill="#fff" stroke="#d6616b" stroke-width="2"/>
<circle cx="1058.63" cy="829" r="2.8" fill="#fff" stroke="#6b6ecf" stroke-width="2"/>
<circle cx="1127.93" cy="818.98" r="2.8" fill="#fff" stroke="#6b6ecf" stroke-width="2"/>
<circle cx="1195" cy="829" r="2.8" fill="#fff" stroke="#6b6ecf" stroke-width="2"/>
<text x="379" y="806.48" class="lb">2</text>
<text x="448.3" y="806.48" class="lb">2</text>
<text x="515.37" y="726.32" class="lb">18</text>
<text x="584.68" y="776.42" class="lb">8</text>
<text x="653.98" y="756.38" class="lb">12</text>
<text x="721.05" y="706.28" class="lb">22</text>
<text x="790.35" y="786.44" class="lb">6</text>
<text x="857.42" y="731.33" class="lb">17</text>
<text x="926.73" y="736.34" class="lb">16</text>
<text x="996.03" y="706.28" class="lb">22</text>
<text x="1058.63" y="741.35" class="lb">15</text>
<text x="1127.93" y="761.39" class="lb">11</text>
<text x="1195" y="495.86" class="lb">64</text>
<text x="721.05" y="721.31" class="lb">19</text>
<text x="790.35" y="786.44" class="lb">6</text>
<text x="857.42" y="786.44" class="lb">6</text>
<text x="926.73" y="786.44" class="lb">6</text>
<text x="996.03" y="786.44" class="lb">6</text>
<text x="1058.63" y="786.44" class="lb">6</text>
<text x="1127.93" y="786.44" class="lb">6</text>
<text x="1195" y="786.44" class="lb">6</text>
<text x="379" y="806.48" class="lb">2</text>
<text x="448.3" y="816.5" class="lb">0</text>
<text x="515.37" y="816.5" class="lb">0</text>
<text x="584.68" y="816.5" class="lb">0</text>
<text x="653.98" y="816.5" class="lb">0</text>
<text x="721.05" y="811.49" class="lb">1</text>
<text x="790.35" y="806.48" class="lb">2</text>
<text x="857.42" y="801.47" class="lb">3</text>
<text x="926.73" y="806.48" class="lb">2</text>
<text x="996.03" y="786.44" class="lb">6</text>
<text x="1058.63" y="801.47" class="lb">3</text>
<text x="1127.93" y="766.4" class="lb">10</text>
<text x="1195" y="806.48" class="lb">2</text>
<text x="790.35" y="811.49" class="lb">1</text>
<text x="857.42" y="801.47" class="lb">3</text>
<text x="926.73" y="791.45" class="lb">5</text>
<text x="996.03" y="786.44" class="lb">6</text>
<text x="1058.63" y="776.42" class="lb">8</text>
<text x="1127.93" y="756.38" class="lb">12</text>
<text x="1195" y="786.44" class="lb">6</text>
<text x="1058.63" y="816.5" class="lb">0</text>
<text x="1127.93" y="816.5" class="lb">0</text>
<text x="1195" y="816.5" class="lb">0</text>
<text x="996.03" y="801.47" class="lb">3</text>
<text x="1058.63" y="811.49" class="lb">1</text>
<text x="1127.93" y="811.49" class="lb">1</text>
<text x="1195" y="811.49" class="lb">1</text>
<text x="857.42" y="811.49" class="lb">1</text>
<text x="926.73" y="811.49" class="lb">1</text>
<text x="996.03" y="811.49" class="lb">1</text>
<text x="1058.63" y="816.5" class="lb">0</text>
<text x="379" y="806.48" class="lb">2</text>
<text x="448.3" y="811.49" class="lb">1</text>
<text x="515.37" y="811.49" class="lb">1</text>
<text x="584.68" y="811.49" class="lb">1</text>
<text x="653.98" y="811.49" class="lb">1</text>
<text x="721.05" y="811.49" class="lb">1</text>
<text x="790.35" y="811.49" class="lb">1</text>
<text x="857.42" y="811.49" class="lb">1</text>
<text x="926.73" y="796.46" class="lb">4</text>
<text x="996.03" y="801.47" class="lb">3</text>
<text x="1058.63" y="806.48" class="lb">2</text>
<text x="1127.93" y="806.48" class="lb">2</text>
<text x="1195" y="806.48" class="lb">2</text>
<text x="1058.63" y="816.5" class="lb">0</text>
<text x="1127.93" y="806.48" class="lb">2</text>
<text x="1195" y="816.5" class="lb">0</text>
<text x="379" y="846" text-anchor="middle" class="ax">May</text>
<text x="515.37" y="846" text-anchor="middle" class="ax">Jul</text>
<text x="653.98" y="846" text-anchor="middle" class="ax">Sep</text>
<text x="790.35" y="846" text-anchor="middle" class="ax">Nov</text>
<text x="926.73" y="846" text-anchor="middle" class="ax axb">2023</text>
<text x="1058.63" y="846" text-anchor="middle" class="ax">Mar</text>
<text x="1195" y="846" text-anchor="middle" class="ax">May</text>
</svg>
</body></html>
